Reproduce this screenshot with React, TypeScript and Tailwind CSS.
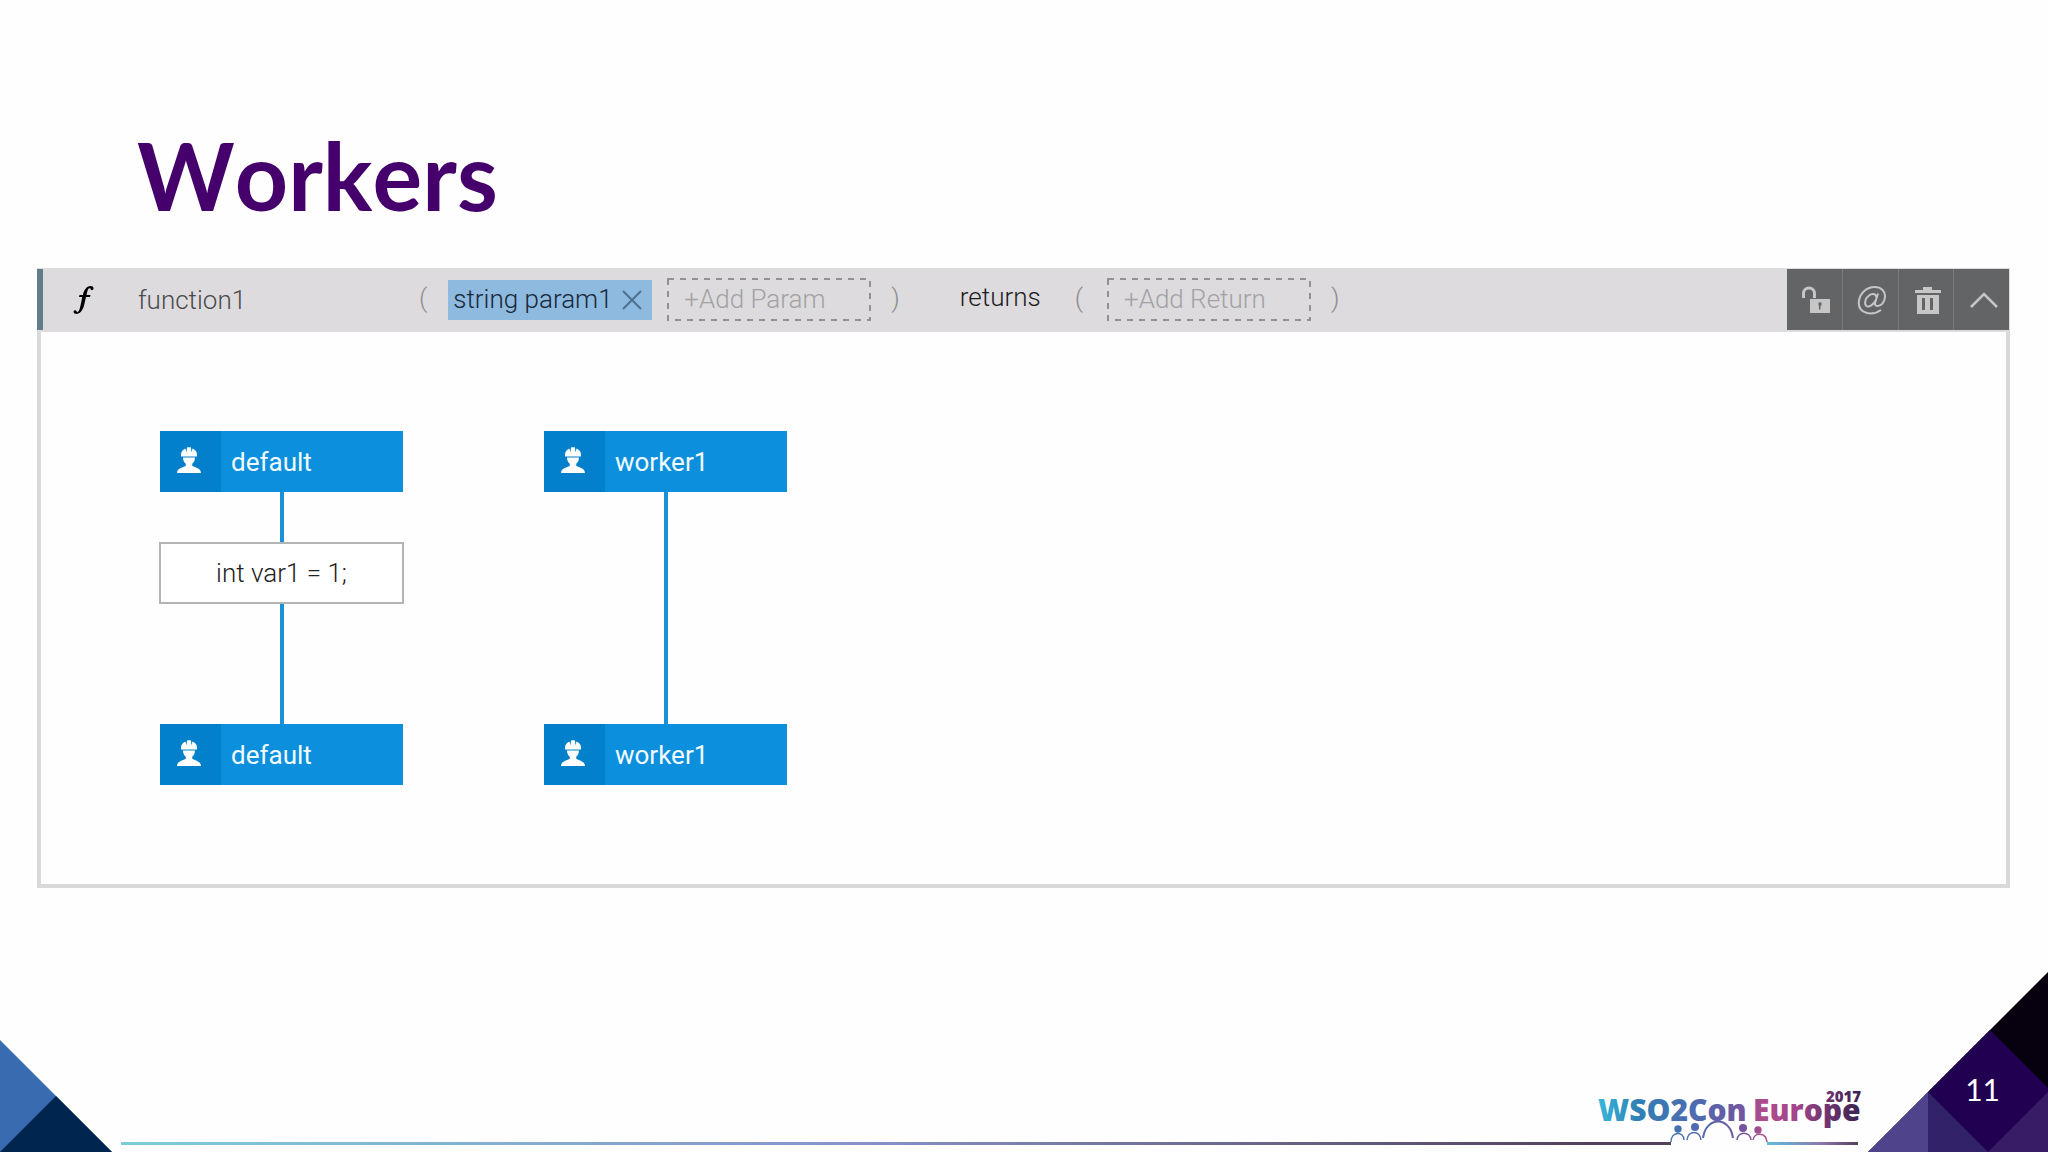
import React from 'react';

interface WorkerBoxProps {
  name: string;
}

const WorkerIcon: React.FC = () => (
  <svg viewBox="0 0 24 26" className="h-[26px] w-6" fill="#fff" aria-hidden="true">
    <path d="M4 9.500V7.500C4 4.500 6 2.300 8.500 1.400L9.600 5.500L10 .6C11 0 13 0 14 .6L14.400 5.500L15.500 1.400C18 2.300 20 4.500 20 7.500V9.500Z" />
    <path d="M6 10.500H18C18 13.500 16.800 15.500 15.200 16.800V18.500C16.500 20.500 24 20.500 24 26H0C0 20.500 7.500 20.500 8.800 18.500V16.800C7.200 15.500 6 13.500 6 10.500Z" />
  </svg>
);

const WorkerBox: React.FC<WorkerBoxProps> = ({ name }) => (
  <div className="flex h-[61px] w-[243px] items-center bg-[#0c90dd] text-[26px] text-[#f2fbff]">
    <div className="flex h-full w-[61px] items-center justify-center bg-[#0380cb] pr-1 pb-1">
      <WorkerIcon />
    </div>
    <span className="pl-[10px]">{name}</span>
  </div>
);

const Worker: React.FC<WorkerBoxProps & { statement?: string }> = ({ name, statement }) => (
  <div className="flex w-[245px] flex-col items-center">
    <WorkerBox name={name} />
    {statement ? (
      <>
        <div className="h-[50px] w-1 bg-[#1a90d6]" />
        <div className="flex h-[62px] w-full items-center justify-center border-2 border-[#b4b4b4] bg-white text-[26px] font-light text-[#222]">
          {statement}
        </div>
        <div className="h-[120px] w-1 bg-[#1a90d6]" />
      </>
    ) : (
      <div className="h-[232px] w-1 bg-[#1a90d6]" />
    )}
    <WorkerBox name={name} />
  </div>
);

const Paren: React.FC<{ children: string }> = ({ children }) => (
  <span className="pb-1 text-[26px] font-light text-[#8f8e90]">{children}</span>
);

const AddButton: React.FC<{ label: string }> = ({ label }) => (
  <button
    type="button"
    className="relative flex h-[43px] w-[204px] items-center pb-[2px] pl-[17px] text-[26px] font-light text-[#a3a2a4]"
  >
    <svg className="absolute inset-0 h-full w-full" fill="none" stroke="#919092" strokeWidth="2" aria-hidden="true">
      <rect x="1" y="1" width="202" height="41" strokeDasharray="6 6" />
    </svg>
    {label}
  </button>
);

const toolClass = 'flex h-full flex-1 items-center justify-center border-l border-[#7b7b7c] first:border-l-0';

const Toolbar: React.FC = () => (
  <div className="flex h-[61px] w-[222px] bg-[#636466] text-[#c6c6c7]">
    <button type="button" aria-label="Unlock" className={toolClass}>
      <svg viewBox="0 0 30 28" className="ml-1 h-7 w-[30px]" aria-hidden="true">
        <path d="M2.500 12V7.500a5.500 5.500 0 0 1 11 0V12" fill="none" stroke="currentColor" strokeWidth="3" />
        <path d="M9 13h20v14H9z" fill="currentColor" />
        <path d="M17.500 16.500h3v3h-1v4h-1.500v-4h-.5z" fill="#636466" />
      </svg>
    </button>
    <button type="button" aria-label="Annotations" className={toolClass}>
      <svg viewBox="0 0 30 30" className="ml-1 h-[30px] w-[30px]" fill="none" stroke="currentColor" strokeWidth="2" aria-hidden="true">
        <path d="M24 25C20 28 15 29 10 28C4 26.500 1 22 2 15.500C3.500 7.500 10 2 17.500 2C24 2 28.500 6 28 12C27.500 17.500 24 21 20.500 21C18 21 17.500 19.500 18.500 16.500L21 8.500" />
        <path d="M19.500 12.500C19 8.500 15 8 12 10.500C8 13.500 7 19 9.500 21C12 22.500 16.500 20 19 15" />
      </svg>
    </button>
    <button type="button" aria-label="Delete" className={toolClass}>
      <svg viewBox="0 0 26 28" className="ml-1 h-7 w-[26px]" fill="currentColor" aria-hidden="true">
        <path d="M0 4h8V1h9v3h9v3H0z" />
        <path fillRule="evenodd" d="M2 9h22v19H2zM7 12v12h3V12zM15 12v12h3V12z" />
      </svg>
    </button>
    <button type="button" aria-label="Collapse" className={toolClass}>
      <svg viewBox="0 0 28 16" className="ml-1 h-4 w-7" fill="none" stroke="currentColor" strokeWidth="2.500" aria-hidden="true">
        <path d="M1 15 14 2 27 15" />
      </svg>
    </button>
  </div>
);

const FunctionHeader: React.FC = () => (
  <div className="flex h-16 items-center border-t border-[#dddcde] bg-[#dddbde] pr-px pb-[2px]">
    <div className="h-[61px] w-[6px] bg-[#607d89]" />
    <svg viewBox="0 0 21 28" className="ml-[30px] h-7 w-[21px]" aria-hidden="true">
      <path d="M20.500 2.500C20 5 17.500 4.500 17.500 2.500C15.500 1.500 14.600 4 14.100 6.500L13.500 9H17.500L17 11H13L11 19.500C9.500 25.500 6 28.500 2.500 27.800C0 27.300 0 24.500 2 24.300C3.500 24.200 3.600 25.400 4 26.200C6 26 6.700 23 7.400 20L9.300 11H6L6.500 9H9.800C11 4 13.500 0 17.500 0C19.500 0 20.700 1 20.500 2.500Z" />
    </svg>
    <span className="ml-[44px] w-[281px] text-[26px] font-light text-[#4b4b4d]">function1</span>
    <Paren>(</Paren>
    <div className="ml-[21px] flex h-10 w-[204px] items-center justify-between bg-[#8fbadf] pr-[10px] pl-[5px] text-[26px] font-light text-[#16283a]">
      <span className="pb-[2px]">string param1</span>
      <button type="button" aria-label="Remove param1">
        <svg viewBox="0 0 20 20" className="h-5 w-5" stroke="#4e718f" strokeWidth="2" aria-hidden="true">
          <path d="M1 1 19 19M19 1 1 19" />
        </svg>
      </button>
    </div>
    <div className="mr-5 ml-[15px] flex">
      <AddButton label="+Add Param" />
    </div>
    <Paren>)</Paren>
    <span className="mr-[34px] ml-[60px] pb-[6px] text-[26px] font-light text-[#1c1c1e]">returns</span>
    <Paren>(</Paren>
    <div className="mr-5 ml-6 flex">
      <AddButton label="+Add Return" />
    </div>
    <Paren>)</Paren>
    <div className="ml-auto">
      <Toolbar />
    </div>
  </div>
);

const ConferenceLogo: React.FC = () => (
  <svg viewBox="0 0 278 72" className="h-[72px] w-[278px]" role="img" aria-label="WSO2Con Europe 2017">
    <defs>
      <linearGradient id="logo" gradientUnits="userSpaceOnUse" x1="9" y1="0" x2="272" y2="0">
        <stop offset="0" stopColor="#38b6d8" />
        <stop offset=".15" stopColor="#2f7fb5" />
        <stop offset=".4" stopColor="#5468ae" />
        <stop offset=".56" stopColor="#75549c" />
        <stop offset=".62" stopColor="#b04c8c" />
        <stop offset=".75" stopColor="#a3458b" />
        <stop offset="1" stopColor="#34214f" />
      </linearGradient>
      <linearGradient id="tail" gradientUnits="userSpaceOnUse" x1="177" y1="0" x2="268" y2="0">
        <stop offset="0" stopColor="#62bcd8" />
        <stop offset=".6" stopColor="#8a77ad" />
        <stop offset="1" stopColor="#564058" />
      </linearGradient>
    </defs>
    <g fill="url(#logo)" fontFamily="'Open Sans', sans-serif" fontWeight="800">
      <text x="8" y="41" fontSize="30">WSO2Con</text>
      <text x="163" y="41" fontSize="30">Europe</text>
      <text x="236" y="22" fontSize="15">2017</text>
    </g>
    <g fill="url(#logo)">
      <circle cx="88" cy="49" r="3.700" />
      <circle cx="105" cy="47" r="4" />
      <circle cx="153" cy="48" r="4" />
      <circle cx="168" cy="50" r="3.700" />
    </g>
    <g fill="none" stroke="url(#logo)" strokeWidth="1.500">
      <path d="M81 62C81 51 94 51 94 60M97 60C98 50 110 50 111 60" />
      <path d="M113 58C116 36 140 36 143 58" strokeWidth="2" />
      <path d="M147 60C148 51 160 51 161 60M163 60C164 52 176 52 177 62" />
    </g>
    <path d="M0 62h81v3H0z" fill="#51425a" />
    <path d="M177 62h91v3h-91z" fill="url(#tail)" />
  </svg>
);

const Footer: React.FC = () => (
  <footer className="flex items-end justify-between">
    <svg viewBox="0 0 112 112" className="h-28 w-28" aria-hidden="true">
      <path d="M0 0 112 112H0z" fill="#386bb0" />
      <path d="M56 56 112 112H0z" fill="#002650" />
    </svg>
    <div className="ml-[9px] flex flex-1 items-end">
      <div className="mb-[7px] h-[3px] flex-1 bg-linear-to-r from-[#7accd8] via-[#8793c8] to-[#51425a]" />
      <ConferenceLogo />
    </div>
    <div className="relative">
      <svg viewBox="0 0 180 180" className="h-[180px] w-[180px]" aria-hidden="true">
        <path d="M180 0V180H0z" fill="#06000f" />
        <path d="M122 58 180 116V180H60V120z" fill="#210052" />
        <path d="M60 120V180H0z" fill="#4f448c" />
        <path d="M60 120 120 180H60z" fill="#31226a" />
        <path d="M180 120V180H120z" fill="#381c66" />
      </svg>
      <span className="absolute right-[48px] bottom-[48px] font-['Lato',sans-serif] text-[30px] text-white">11</span>
    </div>
  </footer>
);

export default function App() {
  return (
    <div className="flex min-h-screen flex-col bg-[#fefefe] font-['Roboto',sans-serif] leading-none">
      <h1 className="pt-[129px] pl-[137px] font-['Lato',sans-serif] text-[93px] leading-[93px] font-bold text-[#45006b] [font-kerning:none]">
        Workers
      </h1>
      <main className="mt-[46px] mr-[38px] ml-[37px]">
        <FunctionHeader />
        <div className="flex gap-[139px] border-4 border-t-0 border-[#d9d9d9] pt-[99px] pb-[99px] pl-[118px]">
          <Worker name="default" statement="int var1 = 1;" />
          <Worker name="worker1" />
        </div>
      </main>
      <div className="mt-auto">
        <Footer />
      </div>
    </div>
  );
}
